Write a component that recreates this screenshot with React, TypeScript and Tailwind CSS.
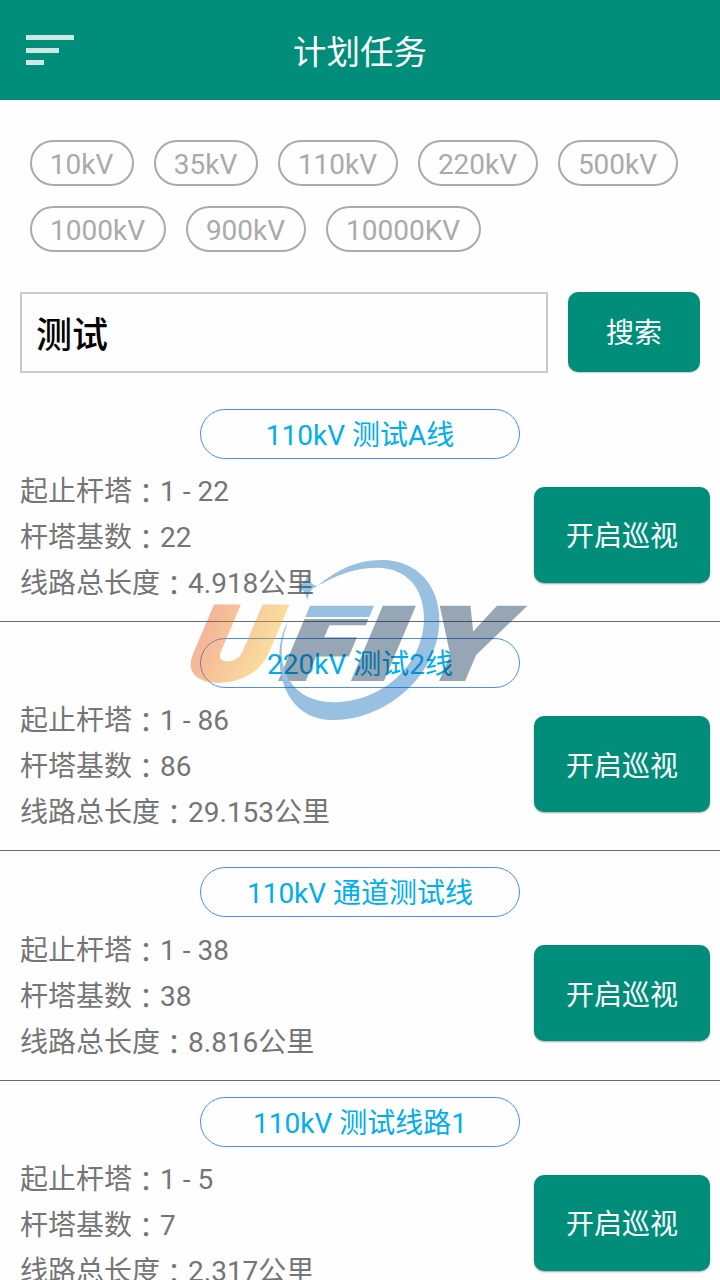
import { useState } from "react";

type Task = {
  id: number;
  name: string;
  range: string;
  count: number;
  length: string;
};

const voltages = [
  { label: "10kV", width: "w-[104px]" },
  { label: "35kV", width: "w-[104px]" },
  { label: "110kV", width: "w-[120px]" },
  { label: "220kV", width: "w-[120px]" },
  { label: "500kV", width: "w-[120px]" },
  { label: "1000kV", width: "w-[136px]" },
  { label: "900kV", width: "w-[120px]" },
  { label: "10000KV", width: "w-[155px]" },
];

const tasks: Task[] = [
  { id: 1, name: "110kV 测试A线", range: "1 - 22", count: 22, length: "4.918公里" },
  { id: 2, name: "220kV 测试2线", range: "1 - 86", count: 86, length: "29.153公里" },
  { id: 3, name: "110kV 通道测试线", range: "1 - 38", count: 38, length: "8.816公里" },
  { id: 4, name: "110kV 测试线路1", range: "1 - 5", count: 7, length: "2.317公里" },
];

function Header() {
  return (
    <header className="relative flex h-[100px] shrink-0 items-center justify-center bg-[#008e7b]">
      <button className="absolute top-[35px] left-[26px] flex flex-col gap-[7.5px]" aria-label="menu">
        <span className="h-[5px] w-12 bg-[#cce8e4]" />
        <span className="h-[5px] w-[33px] bg-[#cce8e4]" />
        <span className="h-[5px] w-[18px] bg-[#cce8e4]" />
      </button>
      <h1 className="mt-[5px] text-[33.5px] leading-none text-white">计划任务</h1>
    </header>
  );
}

function Row({ label, value }: { label: string; value: string | number }) {
  return (
    <p className="flex h-[46px] items-center whitespace-pre">
      {label}
      <span className="font-['Noto_Sans_CJK_TC',sans-serif]">：</span>
      {value}
    </p>
  );
}

function TaskItem({ task }: { task: Task }) {
  return (
    <li className="h-[229.33px] shrink-0 border-b border-[#6b6b6b] pt-4">
      <div className="mx-auto flex h-[50px] w-80 items-center justify-center rounded-full border border-[#4d8df0] pt-1 text-[#00aef0]">
        {task.name}
      </div>
      <div className="flex items-start justify-between pr-[10px] pl-5 text-[#757575]">
        <div className="pt-[10.3px]">
          <Row label="起止杆塔" value={task.range} />
          <Row label="杆塔基数" value={task.count} />
          <Row label="线路总长度" value={task.length} />
        </div>
        <button className="mt-7 h-24 w-44 rounded-[10px] bg-[#008e7b] pt-[5px] text-white shadow-[0_1px_2px_rgba(0,0,0,0.35)]">
          开启巡视
        </button>
      </div>
    </li>
  );
}

function Watermark() {
  return (
    <svg
      className="pointer-events-none absolute top-[550px] left-[180px] opacity-40"
      width="360"
      height="180"
      viewBox="0 0 360 180"
      fontFamily="Inter"
      fontWeight="900"
      fontSize="98"
      strokeWidth="4"
    >
      <defs>
        <linearGradient id="warm">
          <stop offset="0" stopColor="#e64600" />
          <stop offset="1" stopColor="#f6b011" />
        </linearGradient>
        <linearGradient id="cut" gradientUnits="userSpaceOnUse" x1="0" y1="-73" x2="0" y2="2">
          <stop offset="0.15" stopColor="#0264b4" />
          <stop offset="0.15" stopColor="#fff" stopOpacity="0" />
          <stop offset="0.18" stopColor="#fff" stopOpacity="0" />
          <stop offset="0.18" stopColor="#00254b" />
        </linearGradient>
      </defs>
      <text transform="translate(-1 129.500) skewX(-23) scale(1.15 1.03)" fill="url(#warm)" stroke="url(#warm)">U</text>
      <text transform="translate(96 128.500) skewX(-23) scale(1.18 1)" fill="url(#cut)" stroke="url(#cut)">F</text>
      <text transform="translate(168 128.500) skewX(-23) scale(1.42 1)" fill="#00254b" stroke="#00254b">I</text>
      <text transform="translate(230 128.500) skewX(-23) scale(1.12 1)" fill="#00254b" stroke="#00254b">Y</text>
      <g fill="#0264b4" transform="scale(0.3333)">
        <path d="M412 108C470 60 530 30 605 30C710 30 778 105 778 210C778 370 625 510 460 510C345 510 298 415 298 320C298 280 306 245 325 215C310 250 305 280 305 310C308 400 370 457 460 457C605 457 732 345 732 205C732 115 680 53 590 53C520 53 465 78 412 108Z" />
        <path d="M382 72Q386 104 412 108Q388 116 382 150Q376 116 348 110Q378 104 382 72Z" />
      </g>
    </svg>
  );
}

export default function App() {
  const [keyword, setKeyword] = useState("测试");

  return (
    <div className="relative flex h-[1280px] w-[720px] flex-col overflow-hidden bg-[#fefefe] font-[Roboto,'Noto_Sans_CJK_SC',sans-serif] text-[28px] leading-none">
      <Header />

      <div className="flex flex-wrap gap-5 px-[30px] pt-10 text-[#aaaaaa]">
        {voltages.map((v) => (
          <span
            key={v.label}
            className={`flex h-[46px] items-center justify-center rounded-full border-2 border-[#aaaaaa] pt-[3px] pr-px ${v.width}`}
          >
            {v.label}
          </span>
        ))}
      </div>

      <div className="mt-10 flex gap-5 px-5">
        <input
          value={keyword}
          onChange={(e) => setKeyword(e.target.value)}
          className="h-[81px] w-[528px] border-2 border-[#cacaca] px-[14px] pb-[2px] text-4xl font-medium text-black outline-none"
        />
        <button className="h-20 w-[132px] rounded-[10px] bg-[#008e7b] pt-[3px] text-white shadow-[0_1px_1px_rgba(0,0,0,0.2)]">
          搜索
        </button>
      </div>

      <ul className="mt-[19.7px] flex flex-col">
        {tasks.map((task) => (
          <TaskItem key={task.id} task={task} />
        ))}
      </ul>

      <Watermark />
    </div>
  );
}
